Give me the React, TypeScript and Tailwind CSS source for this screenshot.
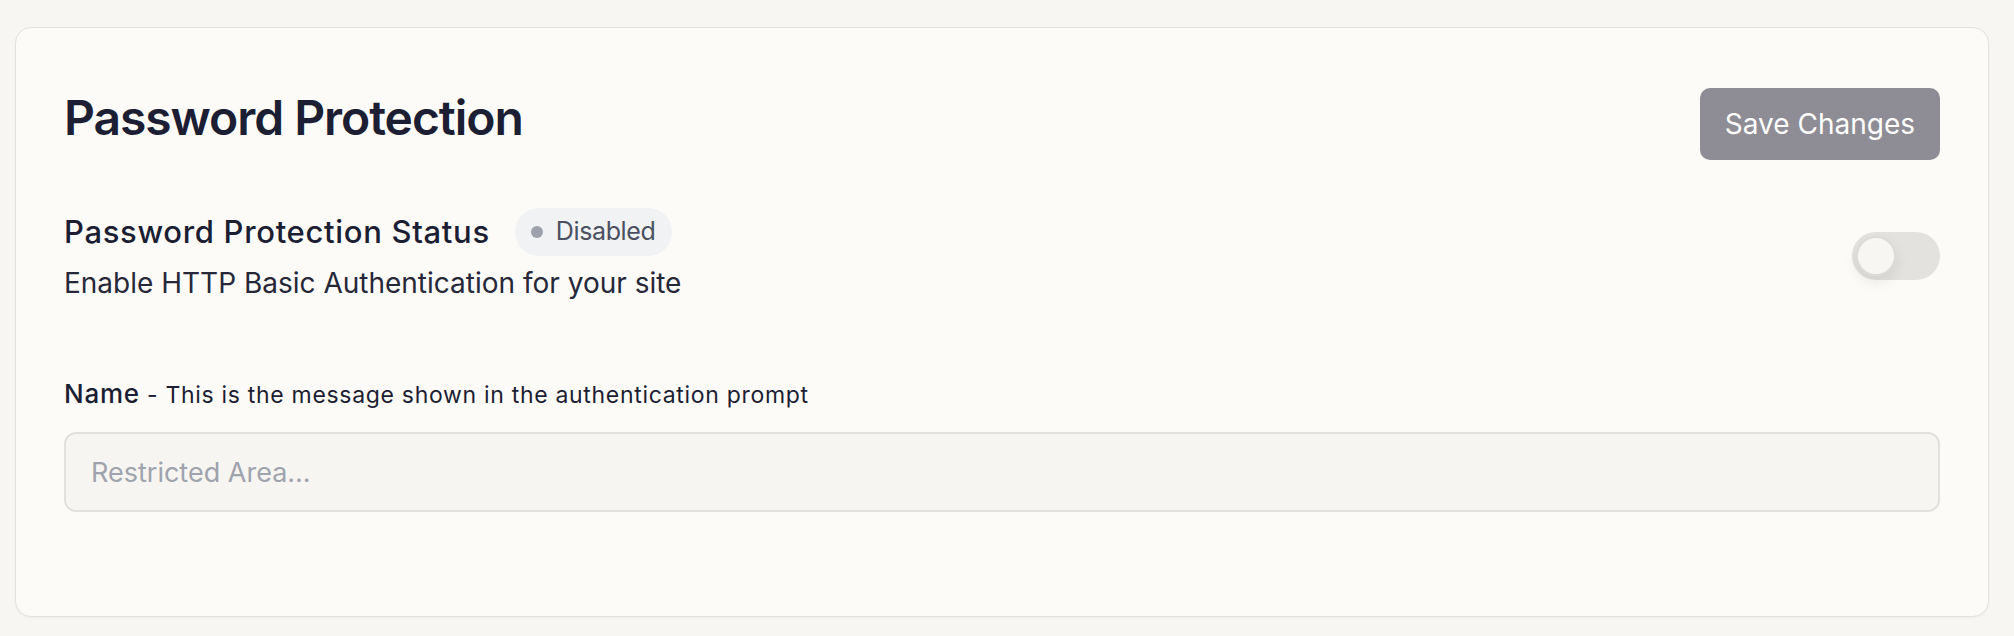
import { useState } from "react";

function Toggle({ on, onChange }: { on: boolean; onChange: (v: boolean) => void }) {
  return (
    <button
      type="button"
      role="switch"
      aria-checked={on}
      onClick={() => onChange(!on)}
      className={`relative flex h-[48px] w-[88px] shrink-0 items-center rounded-full px-[4px] ${
        on ? "bg-[#8e8c95]" : "bg-[#e3e2df]"
      }`}
    >
      <span
        className={`h-[40px] w-[40px] rounded-full border-2 border-[#dcdbd8] bg-[#f7f6f2] shadow-[0_6px_14px_rgba(0,0,0,0.08)] ${
          on ? "ml-auto" : ""
        }`}
      />
    </button>
  );
}

export default function App() {
  const [enabled, setEnabled] = useState(false);
  const [name, setName] = useState("");

  return (
    <div className="min-h-screen bg-[#f8f6f2] pb-[19px] pl-[15px] pr-[25px] pt-[27px] font-['Inter',sans-serif] text-[#1c1e33]">
      <div className="rounded-[16px] border border-[#e4e2de] bg-[#fdfbf7] px-[48px] pb-[104px] pt-[60px] shadow-[0_1px_2px_rgba(0,0,0,0.04)]">
        {/* header */}
        <div className="flex items-start justify-between">
          <h1 className="text-[48px] font-semibold leading-[60px] tracking-[-0.022em]">
            Password Protection
          </h1>
          <button
            type="button"
            className="h-[72px] rounded-[10px] bg-[#8e8c95] px-[25px] text-[28px] font-normal text-white"
          >
            Save Changes
          </button>
        </div>

        {/* status */}
        <div className="mt-[48px] flex items-center justify-between">
          <div>
            <div className="flex items-center gap-[25px]">
              <span className="text-[31px] font-medium leading-[40px] tracking-[0.022em]">
                Password Protection Status
              </span>
              <span className="flex h-[48px] items-center gap-[13px] rounded-full bg-[#f1f2f4] pl-[16px] pr-[17px] text-[25px] tracking-[-0.015em] text-[#4a5060]">
                <span className="h-[12px] w-[12px] rounded-full bg-[#9ca1ab]" />
                {enabled ? "Enabled" : "Disabled"}
              </span>
            </div>
            <p className="mt-[7px] text-[28px] leading-[40px] text-[#262839]">
              Enable HTTP Basic Authentication for your site
            </p>
          </div>
          <Toggle on={enabled} onChange={setEnabled} />
        </div>

        {/* name field */}
        <div className="mt-[73px]">
          <label className="block leading-[36px]">
            <span className="text-[26px] font-medium tracking-[0.03em]">Name</span>
            <span className="text-[23px] tracking-[0.03em]"> - This is the message shown in the authentication prompt</span>
          </label>
          <input
            value={name}
            onChange={(e) => setName(e.target.value)}
            placeholder="Restricted Area..."
            className="mt-[17px] h-[80px] w-full rounded-[12px] border-2 border-[#e3e1dd] bg-[#f7f5f1] px-[25px] text-[27px] outline-none placeholder:text-[#9ea3ad]"
          />
        </div>
      </div>
    </div>
  );
}
